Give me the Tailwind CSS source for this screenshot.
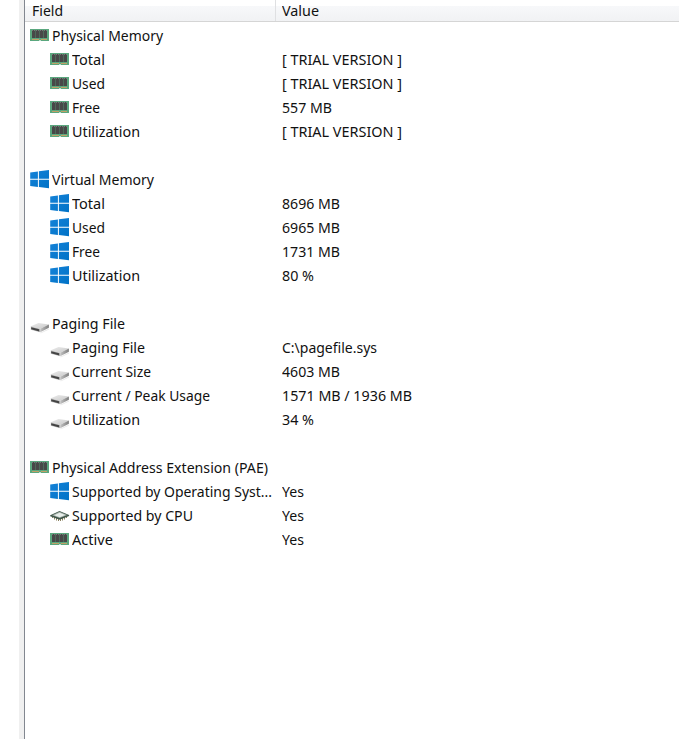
<!DOCTYPE html>
<html lang="en">
<head>
<meta charset="utf-8">
<title>Memory</title>
<script src="https://cdn.jsdelivr.net/npm/@tailwindcss/browser@4"></script>
</head>
<body class="bg-white">
<svg class="absolute size-0">
  <defs>
    <linearGradient id="win" x1="0" y1="0" x2="1" y2="1"><stop offset="0" stop-color="#1482d8"/><stop offset="1" stop-color="#0072c6"/></linearGradient>
    <linearGradient id="top" x1="0" y1="0" x2="1" y2="1"><stop offset="0" stop-color="#ececec"/><stop offset="1" stop-color="#c8c8c8"/></linearGradient>
    <linearGradient id="side" x1="0" y1="0" x2="1" y2="0"><stop offset="0" stop-color="#c4c4c4"/><stop offset="1" stop-color="#7c7c7c"/></linearGradient>
    <symbol id="ram" viewBox="0 0 20 24">
      <path fill="#5aa77e" d="M0 5h19v12H0z"/>
      <path fill="#4c6a5a" d="M2 6h15v8H2z"/>
      <path fill="#484848" d="M2 6h3v8H2zM6 6h3v8H6zM10 6h3v8h-3zM14 6h3v8h-3z"/>
      <path fill="#777" d="M2 6h1v1H2zM4 6h1v1H4zM6 6h1v1H6zM8 6h1v1H8zM10 6h1v1h-1zM12 6h1v1h-1zM14 6h1v1h-1zM16 6h1v1h-1z"/>
      <path fill="#c2a066" d="M2 15h7v1H2zM11 15h6v1h-6z"/>
      <path fill="#fff" d="M9.4 16h1.2v1H9.4z"/>
    </symbol>
    <symbol id="windows" viewBox="0 0 20 24">
      <path fill="url(#win)" d="M.2 4.600 7.900 3.400v7.300H.2zM8.900 3.200 19 2v8.700H8.900zM.2 11.700h7.700v7.200L.2 18zM8.900 11.700H19v8.600L8.900 19z"/>
    </symbol>
    <symbol id="drive" viewBox="0 0 20 24">
      <path fill="#bbb" opacity=".35" d="m3 19 7 2 9-4.500v1l-8 3.800z"/>
      <path fill="url(#top)" d="M.8 14.300 8.500 11l10.400 1.500-8.700 4.300z"/>
      <path fill="#bdbdbd" d="m.8 14.300 9.400 2.500v3.500L.8 17.700z"/>
      <path fill="#444" d="m1.200 15.300 8 2v2.200l-8-2.200z"/>
      <path fill="url(#side)" d="m10.200 16.800 8.700-4.300v3.200l-8.700 4.600z"/>
    </symbol>
    <symbol id="cpu" viewBox="0 0 20 24">
      <path stroke="#8c8260" stroke-width="1" d="M2.500 12v2M4.500 13v2.500M6.500 14v2.500M8.500 14v3M10.500 14v3M12.500 14v2.500M14.500 13v2.500M16.500 12v2"/>
      <path fill="#3f5548" d="M.2 11.200 9.500 7l9.600 4v1l-9.400 3.800L.2 12.200z"/>
      <path fill="#a3afa8" d="m2 11.300 7.500-3.500 7.800 3.300-7.600 3z"/>
      <path fill="#e8eeea" d="m4.200 11.200 5.400-2.500 5.600 2.400-5.500 2.200z"/>
    </symbol>
  </defs>
</svg>
<div class="flex h-[739px] w-[679px] overflow-hidden pl-[19px] font-['Noto_Sans','Open_Sans',sans-serif] text-[15px] text-[#111]">
  <div class="w-[5px] shrink-0 bg-[#f0f0f0]"></div>
  <div class="w-px shrink-0 bg-[#828790]"></div>
  <main class="flex-1">
    <header class="grid h-[22px] grid-cols-[251px_1fr] border-b border-[#d5d5d5] bg-[linear-gradient(#fff_0_6px,#f7f8fa_6px,#f1f2f4)] leading-[21px]">
      <div class="border-r border-[#dfe0e2] pl-[7px]"><span class="inline-block whitespace-nowrap" data-w="31">Field</span></div>
      <div class="pl-[6px]"><span class="inline-block whitespace-nowrap" data-w="37">Value</span></div>
    </header>
    <div id="rows" class="pt-[2px]"></div>
  </main>
</div>
<script>
// level, icon, label, label width, value, value width
const rows = [
  [0,'ram','Physical Memory',111],
  [1,'ram','Total',33,'[ TRIAL VERSION ]',120],
  [1,'ram','Used',33,'[ TRIAL VERSION ]',120],
  [1,'ram','Free',28,'557 MB',50],
  [1,'ram','Utilization',68,'[ TRIAL VERSION ]',120],
  null,
  [0,'windows','Virtual Memory',102],
  [1,'windows','Total',33,'8696 MB',58],
  [1,'windows','Used',33,'6965 MB',58],
  [1,'windows','Free',28,'1731 MB',58],
  [1,'windows','Utilization',68,'80 %',32],
  null,
  [0,'drive','Paging File',73],
  [1,'drive','Paging File',73,'C:\\pagefile.sys',95],
  [1,'drive','Current Size',79,'4603 MB',58],
  [1,'drive','Current / Peak Usage',138,'1571 MB / 1936 MB',130],
  [1,'drive','Utilization',68,'34 %',32],
  null,
  [0,'ram','Physical Address Extension (PAE)',216],
  [1,'windows','Supported by Operating Syst...',200,'Yes',22],
  [1,'cpu','Supported by CPU',121,'Yes',22],
  [1,'ram','Active',41,'Yes',22],
];
document.getElementById('rows').innerHTML = rows.map(r => r ? `
  <div class="grid h-6 grid-cols-[251px_1fr] leading-[23px]">
    <div class="flex ${r[0] ? 'pl-[25px]' : 'pl-[5px]'}">
      <svg class="mr-[2px] h-6 w-5 shrink-0"><use href="#${r[1]}"/></svg>
      <span class="self-start whitespace-nowrap" data-w="${r[3]}">${r[2]}</span>
    </div>
    <div class="pl-[6px]">${r[4] ? `<span class="inline-block whitespace-nowrap" data-w="${r[5]}">${r[4]}</span>` : ''}</div>
  </div>` : '<div class="h-6"></div>').join('');
const ctx = document.createElement('canvas').getContext('2d');
ctx.font = '15px "Noto Sans"';
for (const el of document.querySelectorAll('[data-w]')) {
  const s = +el.dataset.w / ctx.measureText(el.textContent).width;
  el.style.transformOrigin = '0 50%';
  el.style.transform = `scaleX(${s})`;
}
</script>
</body>
</html>
